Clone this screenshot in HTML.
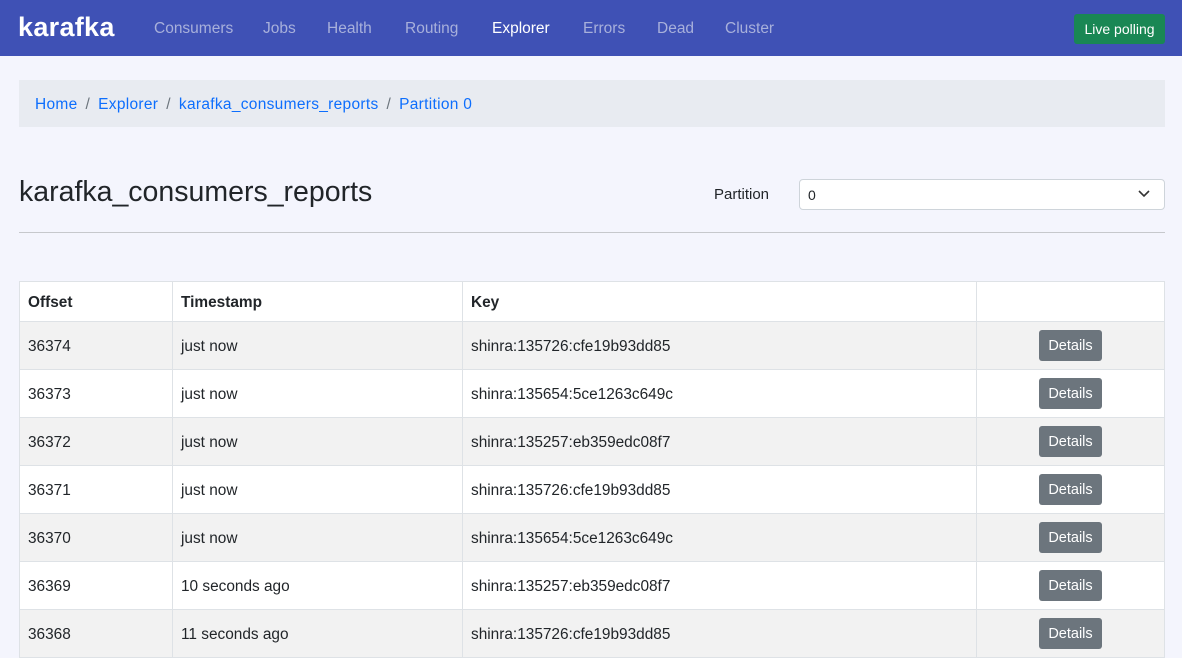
<!DOCTYPE html><html><head><style>
*{box-sizing:border-box}body{margin:0;background:#f4f5fd;font-family:"Liberation Sans","DejaVu Sans",sans-serif;font-size:15px;color:#212529;width:1182px;height:658px;overflow:hidden;position:relative}
.nav{height:56px;background:#3f51b5;position:relative}
.brand{position:absolute;left:18px;top:12px;color:#fff;font-size:27px;font-weight:bold;letter-spacing:0.3px}
.nav a{position:absolute;top:20px;color:#a8b0db;font-size:15.5px}
.live{position:absolute;left:1074px;top:14px;width:91px;height:30px;background:#198754;color:#fff;border-radius:3px;font-size:14px;text-align:center;line-height:30px}
.bc{position:absolute;left:19px;top:80px;width:1146px;height:47px;background:#e8ebf1;padding:16px 16px;color:#0d6efd;font-size:15.5px;letter-spacing:0.3px}
.bc span{color:#6c757d;margin:0 8px}
h1{position:absolute;left:19px;top:176px;margin:0;font-size:28.5px;font-weight:normal;color:#212529}
.pl{position:absolute;left:714px;top:186px}
.sel{position:absolute;left:799px;top:179px;width:366px;height:31px;background:#fff;border:1px solid #ced4da;border-radius:4px;padding:7px 8px;font-size:14px}
.sel svg{position:absolute;right:14px;top:10px}
.hr{position:absolute;left:19px;top:232px;width:1146px;height:1px;background:#c6c8cc}
table{position:absolute;left:19px;top:281px;width:1146px;border-collapse:collapse;font-size:15.4px}
td,th{border:1px solid #dee2e6;padding:2px 8px 0;text-align:left}
th{height:40px;background:#fff;font-weight:bold}
td{height:48px}
tr:nth-child(odd) td{background:#f2f2f2}tr:nth-child(even) td{background:#fff}
td:last-child{padding:0 8px;text-align:center}
.b{display:inline-block;vertical-align:middle;background:#6c757d;color:#fff;border-radius:3px;width:63px;height:31px;line-height:33px;text-align:center;font-size:14.5px}
</style></head><body>
<div class="nav"><div class="brand">karafka</div>
<a style="left:154px">Consumers</a><a style="left:263px">Jobs</a><a style="left:327px">Health</a><a style="left:405px">Routing</a><a style="left:492px;color:#fff">Explorer</a><a style="left:583px">Errors</a><a style="left:657px">Dead</a><a style="left:725px">Cluster</a>
<div class="live">Live polling</div></div>
<div class="bc">Home<span>/</span>Explorer<span>/</span>karafka_consumers_reports<span>/</span>Partition 0</div>
<h1>karafka_consumers_reports</h1>
<div class="pl">Partition</div>
<div class="sel">0<svg width="12" height="8" viewBox="0 0 12 8"><path d="M1 1l5 5 5-5" stroke="#333" stroke-width="1.6" fill="none"/></svg></div>
<div class="hr"></div>
<table><thead><tr><th style="width:153px">Offset</th><th style="width:290px">Timestamp</th><th style="width:514px">Key</th><th></th></tr></thead><tbody>
<tr><td>36374</td><td>just now</td><td>shinra:135726:cfe19b93dd85</td><td><span class="b">Details</span></td></tr>
<tr><td>36373</td><td>just now</td><td>shinra:135654:5ce1263c649c</td><td><span class="b">Details</span></td></tr>
<tr><td>36372</td><td>just now</td><td>shinra:135257:eb359edc08f7</td><td><span class="b">Details</span></td></tr>
<tr><td>36371</td><td>just now</td><td>shinra:135726:cfe19b93dd85</td><td><span class="b">Details</span></td></tr>
<tr><td>36370</td><td>just now</td><td>shinra:135654:5ce1263c649c</td><td><span class="b">Details</span></td></tr>
<tr><td>36369</td><td>10 seconds ago</td><td>shinra:135257:eb359edc08f7</td><td><span class="b">Details</span></td></tr>
<tr><td>36368</td><td>11 seconds ago</td><td>shinra:135726:cfe19b93dd85</td><td><span class="b">Details</span></td></tr>
</tbody></table>
</body></html>
